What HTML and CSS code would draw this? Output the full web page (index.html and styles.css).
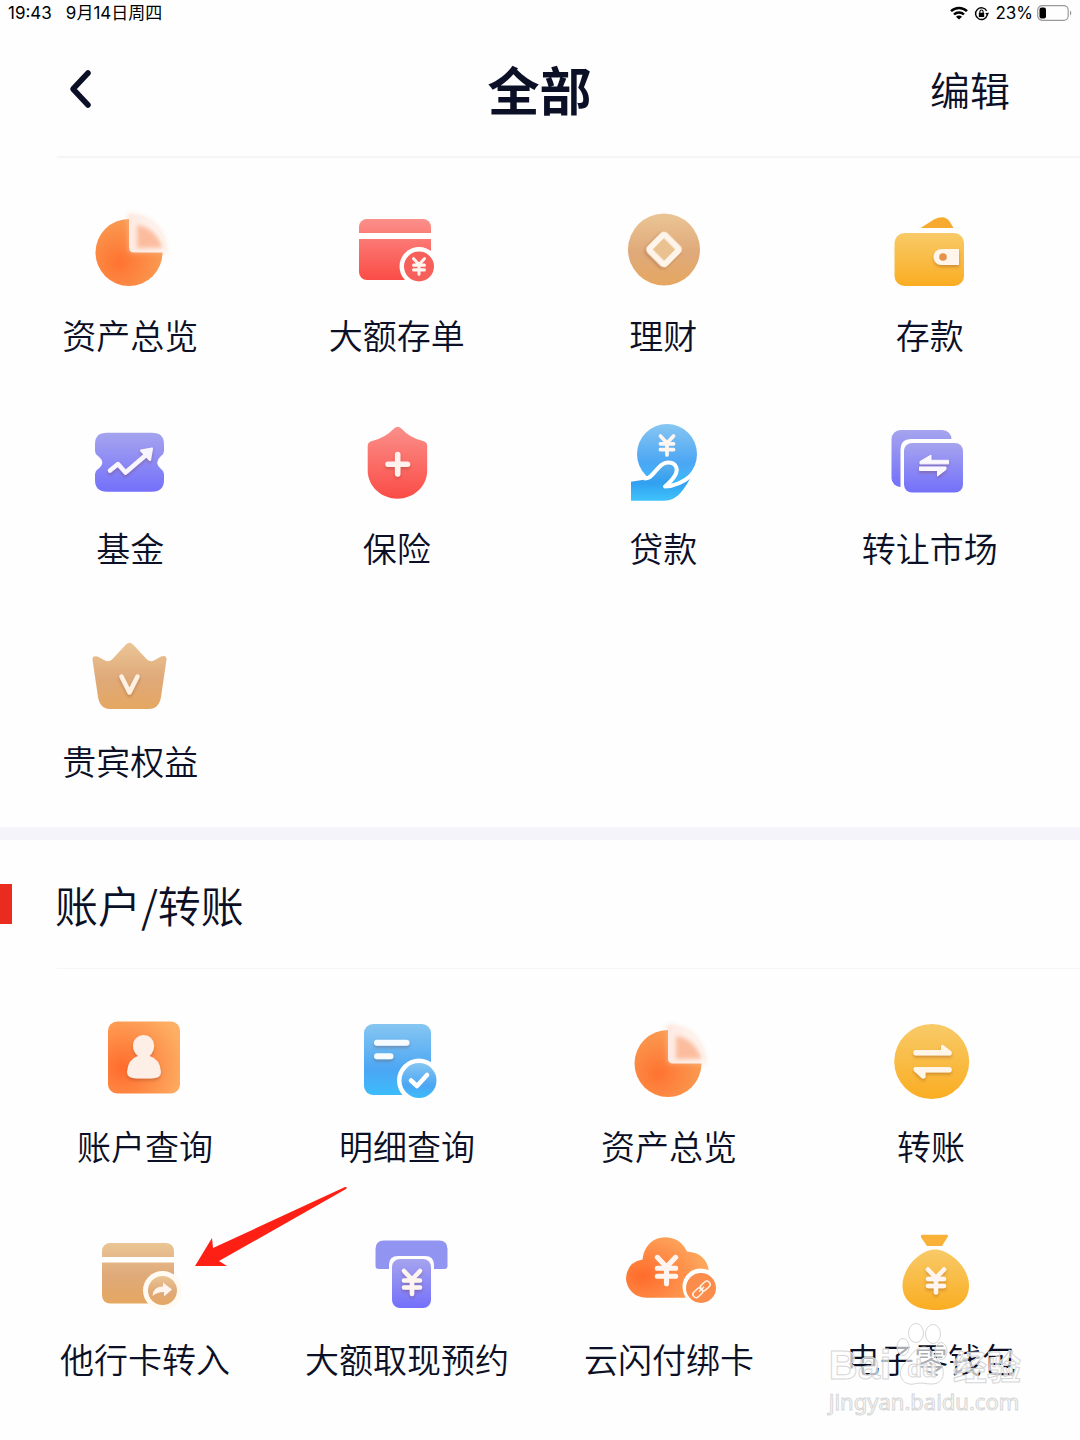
FILE: index.html
```html
<!DOCTYPE html>
<html lang="zh-CN">
<head>
<meta charset="utf-8">
<meta name="viewport" content="width=device-width, initial-scale=1">
<title>全部</title>
<link rel="stylesheet" href="styles.css">
</head>
<body>
<svg class="defs" aria-hidden="true">
  <defs>
    <linearGradient id="red" x2="0" y2="1"><stop offset="0" stop-color="#fb8f8a"/><stop offset="1" stop-color="#fb4c46"/></linearGradient>
    <linearGradient id="tan" x2="0" y2="1"><stop offset="0" stop-color="#ebc595"/><stop offset=".55" stop-color="#dfa979"/><stop offset="1" stop-color="#e5a761"/></linearGradient>
    <linearGradient id="yellow" x2="0" y2="1"><stop offset="0" stop-color="#f8ca68"/><stop offset="1" stop-color="#faad22"/></linearGradient>
    <linearGradient id="violet" x2="0" y2="1"><stop offset="0" stop-color="#a5a4ee"/><stop offset="1" stop-color="#7470fb"/></linearGradient>
    <linearGradient id="blue" x2="0" y2="1"><stop offset="0" stop-color="#86c6f1"/><stop offset=".65" stop-color="#4ba6f4"/><stop offset="1" stop-color="#3cbcfb"/></linearGradient>
    <linearGradient id="hand" x2="0" y2="1"><stop offset="0" stop-color="#5aaeea"/><stop offset=".5" stop-color="#319ff0"/><stop offset="1" stop-color="#3fc3fb"/></linearGradient>
    <radialGradient id="orange" cx=".2" cy=".65" r=".9"><stop offset="0" stop-color="#ff6b2b"/><stop offset="1" stop-color="#fdb065"/></radialGradient>
    <radialGradient id="pie" cx=".35" cy=".65" r=".7"><stop offset="0" stop-color="#fe7330"/><stop offset="1" stop-color="#fa9e55"/></radialGradient>
    <linearGradient id="glass" x2="1" y2="0"><stop offset="0" stop-color="#fdeae2"/><stop offset="1" stop-color="#fff6f2"/></linearGradient>
    <filter id="soft" x="-30%" y="-30%" width="160%" height="160%"><feGaussianBlur stdDeviation="2"/></filter>
    <filter id="lift" x="-30%" y="-30%" width="160%" height="170%"><feDropShadow dx="0" dy="2" stdDeviation="1.5" flood-color="#703020" flood-opacity=".3"/></filter>
    <symbol id="yuan" viewBox="0 0 20 28" overflow="visible">
      <path d="M2 2.500 10 11l8-8.500M2 12h16M2 19h16M10 11v14.500" fill="none" stroke="#fff5f0" stroke-width="4.500" stroke-linecap="round" stroke-linejoin="round"/>
    </symbol>
    <symbol id="pie-chart" viewBox="0 0 100 100">
      <circle cx="49" cy="52.500" r="33.500" fill="url(#pie)"/>
      <path d="M47 13A38 38 0 0 1 87 54H53q-6 0-6-6Z" fill="#fbc9b0" opacity=".35" filter="url(#soft)"/>
      <path d="M49 14C66 14 84 28 86 52.500H54q-5 0-5-5Z" fill="url(#glass)"/>
      <path d="M57 25Q75 27 83 48H57Z" fill="#fbb08c" opacity=".8" filter="url(#soft)"/>
    </symbol>
  </defs>
</svg>

<div class="status">
  <div class="status-group"><span>19:43</span><span class="date">9月14日周四</span></div>
  <div class="status-right">
    <svg class="wifi" viewBox="0 0 18 14" aria-hidden="true"><g fill="none" stroke="#000" stroke-width="2.500"><path d="M1 5.200a11.500 11.500 0 0 1 16 0M4 8.500a7 7 0 0 1 10 0"/></g><path d="M9 13.500 6 10.800a4.200 4.200 0 0 1 6 0Z"/></svg>
    <svg class="lock" viewBox="0 0 14 14" aria-hidden="true"><path d="M11.800 4.500a5.500 5.500 0 1 0 .5 4" fill="none" stroke="#000" stroke-width="1.300"/><path d="m10.500 6.500 3.500-.3-1.500 3.100ZM4.500 6.300h5v4h-5Z"/><path d="M5.500 6.500V5.300a1.500 1.500 0 0 1 3 0v1.200" fill="none" stroke="#000"/></svg>
    <span>23%</span>
    <svg class="battery" viewBox="0 0 35 16" aria-hidden="true"><rect x=".7" y=".7" width="30.500" height="14.600" rx="4.500" fill="none" stroke="#999" stroke-width="1.200"/><rect x="2.500" y="2.500" width="6.500" height="11" rx="2"/><path d="M33 5.500a3 3 0 0 1 0 5Z" fill="#999"/></svg>
  </div>
</div>

<header class="header">
  <button class="back" type="button" aria-label="返回"><svg viewBox="0 0 24 40" aria-hidden="true"><path d="M19 4 4 20l15 16" fill="none" stroke="#0c1026" stroke-width="5.500" stroke-linecap="round" stroke-linejoin="round"/></svg></button>
  <h1>全部</h1>
  <button class="edit" type="button">编辑</button>
</header>

<main>
  <nav class="grid grid-top" aria-label="常用功能">
    <a class="tile" href="#assets"><svg class="icon" aria-hidden="true"><use href="#pie-chart"/></svg><span>资产总览</span></a>
    <a class="tile" href="#large-deposit"><svg class="icon" viewBox="0 0 100 100" aria-hidden="true">
      <rect x="12" y="19" width="72" height="61" rx="8" fill="url(#red)"/><path d="M12 33h72v6H12Z" fill="#fff"/>
      <circle cx="72" cy="66.500" r="19.500" fill="#fff"/><circle cx="72" cy="66.500" r="15" fill="#f7605a"/><use href="#yuan" x="65" y="57" width="14" height="19"/></svg><span>大额存单</span></a>
    <a class="tile" href="#wealth"><svg class="icon" viewBox="0 0 100 100" aria-hidden="true">
      <circle cx="51" cy="49.500" r="36" fill="url(#tan)"/><rect x="40" y="38.500" width="22" height="22" rx="2" transform="rotate(45 51 49.500)" fill="#eac292" stroke="#fff4ea" stroke-width="6" filter="url(#lift)"/></svg><span>理财</span></a>
    <a class="tile" href="#deposit"><svg class="icon" viewBox="0 0 100 100" aria-hidden="true">
      <path d="M40.500 28 54 19.500Q65 14 70 22l3.500 6Z" fill="#f8aa30"/><rect x="14.500" y="33" width="69.500" height="53" rx="10" fill="url(#yellow)"/>
      <path d="M79 49v16H61.500a8 8 0 0 1 0-16Z" fill="#fff5ea" filter="url(#lift)"/><circle cx="63" cy="57" r="3.800" fill="#e59248"/></svg><span>存款</span></a>
    <a class="tile" href="#fund"><svg class="icon" viewBox="0 0 100 100" aria-hidden="true">
      <path d="M27 19.700H72Q84 19.700 84 31V38Q84 41 81 43Q73.500 49.500 81 56Q84 58 84 61V67Q84 78.700 72 78.700H27Q15 78.700 15 67V61Q15 58 18 56Q26.500 49.500 18 43Q15 41 15 38V31Q15 19.700 27 19.700Z" fill="url(#violet)"/>
      <g filter="url(#lift)"><path d="m30 57.500 8-6.500 7.500 8.500L66 42" fill="none" stroke="#f8f5ff" stroke-width="4.500" stroke-linecap="round" stroke-linejoin="round"/><path d="m61 37.500 11-2-2 11.500Z" fill="#f8f5ff" stroke="#f8f5ff" stroke-width="2" stroke-linejoin="round"/></g></svg><span>基金</span></a>
    <a class="tile" href="#insurance"><svg class="icon" viewBox="0 0 100 100" aria-hidden="true">
      <path d="M47 15.500q3.700-3.500 7.400 0Q63 25 76 28q4.200 1 4.200 5V58C80 74 66 85.700 50.500 85.700S21 74 20.700 58V33q0-4 4.300-5Q38 25 47 15.500Z" fill="url(#red)"/>
      <path d="M50.700 41.500v19.500M41 51.200h19.500" stroke="#fff2ee" stroke-width="5.500" stroke-linecap="round" filter="url(#lift)"/></svg><span>保险</span></a>
    <a class="tile" href="#loan"><svg class="icon" viewBox="0 0 100 100" aria-hidden="true">
      <circle cx="54" cy="41" r="30" fill="url(#blue)"/><use href="#yuan" x="45.500" y="21" width="17" height="23"/>
      <path d="M18 68.700Q28 67 36 66C44 58 47 51 54 51L62 57L53 73Q66 73 78 64C71 76 65 87.700 51 87.700H18Z" fill="url(#hand)"/>
      <path d="M31 65.500Q36 65.500 38.500 62.500C45 56 48 49.500 55 49.500C63.500 49.500 65.500 56.500 62 62.500Q59 67.500 52 73.500Q66 73 79 62" fill="none" stroke="#fff" stroke-width="4" stroke-linejoin="round"/></svg><span>贷款</span></a>
    <a class="tile" href="#market"><svg class="icon" viewBox="0 0 100 100" aria-hidden="true">
      <rect x="11.500" y="17" width="60" height="57" rx="9" fill="url(#violet)"/><path d="M20.500 79V37q0-11 11-11H76V79Z" fill="#fff"/><rect x="24" y="30" width="59" height="49.500" rx="8" fill="url(#violet)"/>
      <path d="M40 50.800V48.500L51 42v5.300H68.500v3.500ZM39.500 54H66v2.500L57.500 63V57.500h-18Z" fill="#faf7ff" stroke="#faf7ff" stroke-linejoin="round" filter="url(#lift)"/></svg><span>转让市场</span></a>
    <a class="tile" href="#vip"><svg class="icon" viewBox="0 0 100 100" aria-hidden="true">
      <path d="M46 18.500q3.400-3.500 7 0L67 33.500q3.500 3 7 1L81 30.500q6-2 5.500 3L81 71Q79 83 69 83H30Q20 83 18 71L12.500 34q-.5-5 5-3.500L25 34.500q3.500 2 7-1Z" fill="url(#tan)"/>
      <path d="m41.500 50.500 8 16 8-16" fill="none" stroke="#fff1e2" stroke-width="4.500" stroke-linecap="round" stroke-linejoin="round" filter="url(#lift)"/></svg><span>贵宾权益</span></a>
  </nav>

  <section class="accounts">
    <h2>账户/转账</h2>
    <nav class="grid grid-accounts" aria-label="账户/转账">
      <a class="tile" href="#account-query"><svg class="icon" viewBox="0 0 100 100" aria-hidden="true">
        <rect x="13" y="10.500" width="72" height="72" rx="9" fill="url(#orange)"/>
        <path d="M48.700 24a10.500 10.500 0 0 1 10.500 10.500Q59 41 54.500 45 65 48 66 61q0 6.500-10 6.500H42q-10 0-10-6.500 1-13 11-16-5-4-5-10.500A10.500 10.500 0 0 1 48.700 24Z" fill="#fdeee6" filter="url(#lift)"/></svg><span>账户查询</span></a>
      <a class="tile" href="#statement"><svg class="icon" viewBox="0 0 100 100" aria-hidden="true">
        <rect x="7" y="13" width="67" height="71" rx="9" fill="url(#blue)"/><path d="M20 28.700h29.500a3 3 0 0 1 0 6H20a3 3 0 0 1 0-6ZM20 42.300h13.500a3 3 0 0 1 0 6H20a3 3 0 0 1 0-6Z" fill="#f5fbff" filter="url(#lift)"/>
        <circle cx="62" cy="69.500" r="22" fill="#fff"/><circle cx="62" cy="69.500" r="17.500" fill="url(#blue)"/><path d="m54 69.500 6 5.500 10-11" fill="none" stroke="#fff" stroke-width="4.500" stroke-linecap="round" stroke-linejoin="round"/></svg><span>明细查询</span></a>
      <a class="tile" href="#assets-overview"><svg class="icon" aria-hidden="true"><use href="#pie-chart"/></svg><span>资产总览</span></a>
      <a class="tile" href="#transfer"><svg class="icon" viewBox="0 0 100 100" aria-hidden="true">
        <circle cx="50.700" cy="50.500" r="37.500" fill="url(#yellow)"/>
        <path d="M35 39H60v-4q1-2 3-.500l7.500 6q1 4-2 4H35a2.750 2.750 0 0 1 0-5.500ZM68 56a2.750 2.750 0 0 1 0 5.500H44.500v5q-2 2-4 .500L33 60q-1.500-3 1-4Z" fill="#fff5e8" filter="url(#lift)"/></svg><span>转账</span></a>
      <a class="tile tile-marked" href="#other-bank"><svg class="icon" viewBox="0 0 100 100" aria-hidden="true">
        <rect x="7" y="19" width="72" height="60.500" rx="8" fill="url(#tan)"/><path d="M7 33h72v5.500H7Z" fill="#fff"/>
        <circle cx="67.500" cy="66.500" r="19.500" fill="#fffaf2"/><circle cx="67.500" cy="66.500" r="14.500" fill="url(#tan)"/><path d="M57.500 72Q58 62.500 68 62.500V58.500l9 7-8 7V68q-7 0-11.500 4Z" fill="#fff5ec"/></svg>
        <span>他行卡转入</span>
        <svg class="pointer" viewBox="0 0 152 80" aria-hidden="true"><path d="M0 79 17 51l1 10L150 0q3 0 1 2L24 74l8 5Z" fill="#ff2015"/></svg></a>
      <a class="tile" href="#cash-booking"><svg class="icon" viewBox="0 0 100 100" aria-hidden="true">
        <path d="M27 16.500H82q8.500 0 8.500 8.500V42q0 3-3 3H77V41q0-9-9-9H41q-9 0-9 9v4H22q-3.500 0-3.500-3V25q0-8.500 8.500-8.500Z" fill="#9294f1"/><rect x="35" y="35" width="39" height="49" rx="8" fill="url(#violet)"/><use href="#yuan" x="45" y="44.500" width="20" height="28" filter="url(#lift)"/></svg><span>大额取现预约</span></a>
      <a class="tile" href="#cloud-pay"><svg class="icon" viewBox="0 0 100 100" aria-hidden="true">
        <path d="M27 73.700A20 20 0 0 1 7 54.500Q8 38 23.500 35.500C25 22 34 13.300 46 13.300Q61 13.300 68 27.500Q88 29 90 48V73.700Z" fill="url(#orange)"/><use href="#yuan" x="33.500" y="30.500" width="28" height="32"/>
        <path d="M67 74Q60 62 67 52 75 41 90 46h10v30H67Z" fill="#fff"/><circle cx="82" cy="64" r="15" fill="#fb8d4c"/>
        <g fill="none" stroke="#fff0e4" stroke-width="1.500" transform="rotate(-43 82 65.500)"><rect x="72" y="62.500" width="11" height="6.500" rx="3.200"/><rect x="82" y="62.500" width="11" height="6.500" rx="3.200"/><path d="M79 65.700h7"/></g></svg><span>云闪付绑卡</span></a>
      <a class="tile" href="#e-wallet"><svg class="icon" viewBox="0 0 100 100" aria-hidden="true">
        <path d="M41 10.700H66q2 1 0 3.300L61 22H46l-5.500-8q-1.500-2.500.5-3.300Z" fill="#f9b237"/><path d="M54 25.500C69 25.500 88 44 88 61C88 77 77 86 55 86S21.500 77 21.500 61C21.500 44 39 25.500 54 25.500Z" fill="url(#yellow)"/><use href="#yuan" x="45" y="43" width="20" height="28" filter="url(#lift)"/></svg><span>电子零钱包</span></a>
    </nav>
    <div class="watermark">
      <div class="brand"><span>Bai</span><span class="paw"><svg viewBox="0 0 52 62" aria-hidden="true"><g fill="#fff" fill-opacity=".65" stroke="#d6d6d6"><ellipse cx="20" cy="10" rx="7.500" ry="9.500"/><ellipse cx="37" cy="11" rx="7.500" ry="9.500"/><ellipse cx="7" cy="24" rx="6" ry="8.500"/><ellipse cx="45" cy="28" rx="6" ry="8.500"/><path d="M28 24c8 0 10 10 16 16 6 8 4 21-8 21-7 0-11-2-18 0C6 63 0 50 8 41c6-7 11-17 20-17Z"/></g></svg><span class="du">du</span></span><span class="jingyan">经验</span></div>
      <div class="site">jingyan.baidu.com</div>
    </div>
  </section>
</main>
</body>
</html>
```

FILE: styles.css
```css
* {
  box-sizing: border-box;
}

body {
  margin: 0;
  min-height: 100vh;
  background: #fefefe;
  color: #0c1026;
  font-family: "Noto Sans CJK SC", sans-serif;
}

.defs {
  position: absolute;
  width: 0;
  height: 0;
}

/* Status bar */
.status {
  display: flex;
  justify-content: space-between;
  align-items: center;
  height: 26px;
  padding: 0 8px;
  color: #000;
  font: 400 17px/26px Inter, "Noto Sans CJK SC", sans-serif;
}

.status-group {
  display: flex;
  gap: 14px;
}

.status-right {
  display: flex;
  align-items: center;
  gap: 4px;
}

.wifi {
  width: 18px;
  height: 14px;
}

.lock {
  width: 15px;
  height: 15px;
  margin: 0 2px;
}

.battery {
  width: 35px;
  height: 16px;
}

/* Header */
.header {
  display: grid;
  grid-template-columns: 1fr auto 1fr;
  align-items: center;
  height: 132px;
  padding: 0 70px 6px 69px;
}

.header,
.accounts h2 {
  background: linear-gradient(#f5f5f7, #f5f5f7) 57px 100% / 100% 2px no-repeat;
}

button {
  padding: 0;
  border: 0;
  background: none;
  color: inherit;
  font-family: inherit;
}

.back {
  justify-self: start;
  width: 24px;
  height: 40px;
}

.back svg {
  display: block;
}

h1,
h2 {
  margin: 0;
}

h1 {
  font-size: 52px;
  font-weight: 700;
  line-height: 72px;
}

.edit {
  justify-self: end;
  font-size: 40px;
  font-weight: 350;
  line-height: 56px;
}

/* Function tiles */
.grid {
  display: grid;
  grid-template-columns: repeat(4, 1fr);
  row-gap: 54px;
  padding-top: 42px;
}

.grid-top {
  margin: 0 17px 42px -3px;
}

.grid-accounts {
  margin: 0 18px 0 14px;
}

.tile {
  display: flex;
  flex-direction: column;
  align-items: center;
  gap: 11px;
  color: inherit;
  font-size: 34px;
  font-weight: 350;
  line-height: 48px;
  text-decoration: none;
  white-space: nowrap;
}

.icon {
  width: 100px;
  height: 100px;
}

/* Account section */
.accounts {
  position: relative;
  border-top: 13px solid #f4f4fa;
  padding-bottom: 56px;
}

.accounts h2 {
  display: flex;
  align-items: center;
  height: 129px;
  padding-bottom: 2px;
  background-size: 100% 1px;
  font-size: 43px;
  font-weight: 350;
}

.accounts h2::before {
  content: "";
  width: 12px;
  height: 40px;
  margin-right: 43px;
  background: #ea2b20;
}

.tile-marked {
  position: relative;
}

.pointer {
  position: absolute;
  top: -37px;
  left: 181px;
  width: 152px;
  height: 80px;
}

/* Watermark over the last tile */
.watermark {
  position: absolute;
  right: 59px;
  bottom: 22px;
  color: rgba(255, 255, 255, 0.7);
  -webkit-text-stroke: 1px #d6d6d6;
  pointer-events: none;
}

.brand {
  display: flex;
  align-items: flex-end;
  gap: 5px;
  font: 700 40px/40px "Liberation Sans", "Noto Sans CJK SC", sans-serif;
}

.paw {
  position: relative;
  width: 52px;
  height: 62px;
}

.paw svg {
  display: block;
}

.du {
  position: absolute;
  right: 0;
  bottom: 0;
  left: 0;
  font-size: 24px;
  line-height: 32px;
  text-align: center;
}

.jingyan {
  font-size: 34px;
  line-height: 34px;
}

.site {
  font: 22px/32px "Noto Sans", sans-serif;
}
```
